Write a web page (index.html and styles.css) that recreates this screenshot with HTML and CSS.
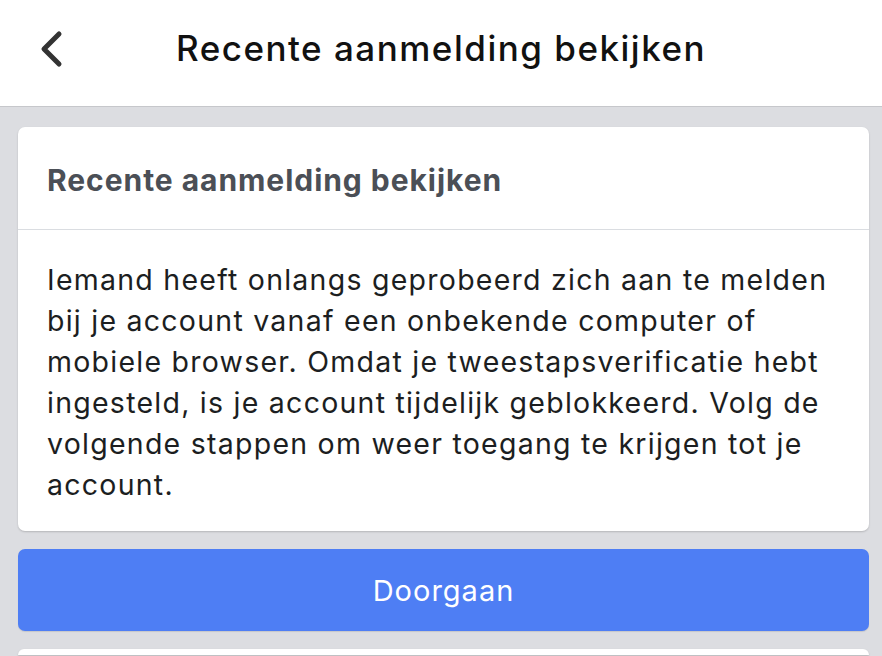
FILE: index.html
```html
<!DOCTYPE html>
<html lang="nl">
<head>
  <meta charset="UTF-8" />
  <meta name="viewport" content="width=device-width, initial-scale=1.0" />
  <title>Recente aanmelding bekijken</title>
  <link rel="stylesheet" href="styles.css">
</head>
<body>

  <div class="header">
    <a class="back" href="#">
      <svg width="26" height="38" viewBox="0 0 26 38">
        <path d="M21 4 L6 19 L21 34" fill="none" stroke="#333" stroke-width="5" stroke-linecap="round" stroke-linejoin="round"/>
      </svg>
    </a>
    <div class="title">Recente aanmelding bekijken</div>
  </div>

  <div class="content">
    <div class="card">
      <div class="card-title">Recente aanmelding bekijken</div>
      <div class="card-body">
        Iemand heeft onlangs geprobeerd zich aan te melden bij je account vanaf een onbekende computer of mobiele browser. Omdat je tweestapsverificatie hebt ingesteld, is je account tijdelijk geblokkeerd. Volg de volgende stappen om weer toegang te krijgen tot je account.
      </div>
    </div>

    <button class="continue">Doorgaan</button>

    <div class="card next"></div>
  </div>

</body>
</html>
```

FILE: styles.css
```css
body {
  margin: 0;
  font-family: 'Inter', 'Liberation Sans', sans-serif;
  background: #dcdde1;
  color: #1c1e21;
  height: 656px;
  overflow: hidden;
}

.header {
  display: flex;
  align-items: center;
  justify-content: center;
  position: relative;
  height: 107px;
  padding-bottom: 10px;
  box-sizing: border-box;
  background: #fff;
  border-bottom: 1px solid #c6c7cb;
}

.header .back {
  position: absolute;
  left: 38px;
  top: 30px;
}

.header .title {
  font-size: 35px;
  font-weight: 500;
  color: #111;
  letter-spacing: 1.5px;
}

.content {
  display: flex;
  flex-direction: column;
  gap: 18px;
  padding: 20px 13px 0 18px;
}

.card {
  background: #fff;
  border-radius: 7px;
  box-shadow: 0 1px 2px rgba(0, 0, 0, 0.18);
}

.card-title {
  height: 103px;
  display: flex;
  align-items: center;
  padding: 3px 29px 0;
  font-size: 30px;
  font-weight: 700;
  letter-spacing: 0.95px;
  color: #4b4f56;
  border-bottom: 1px solid #dadde1;
  box-sizing: border-box;
}

.card-body {
  padding: 29px 20px 26px 29px;
  font-size: 28.5px;
  line-height: 41px;
  letter-spacing: 1.25px;
  color: #1c1e21;
}

.continue {
  height: 82px;
  border: none;
  border-radius: 7px;
  background: #4e7ef4;
  color: #fff;
  font-family: inherit;
  font-size: 29px;
  letter-spacing: 1px;
  box-shadow: 0 1px 1px rgba(0, 0, 0, 0.1);
}

.card.next {
  height: 6px;
  border-radius: 7px 7px 0 0;
}
```
